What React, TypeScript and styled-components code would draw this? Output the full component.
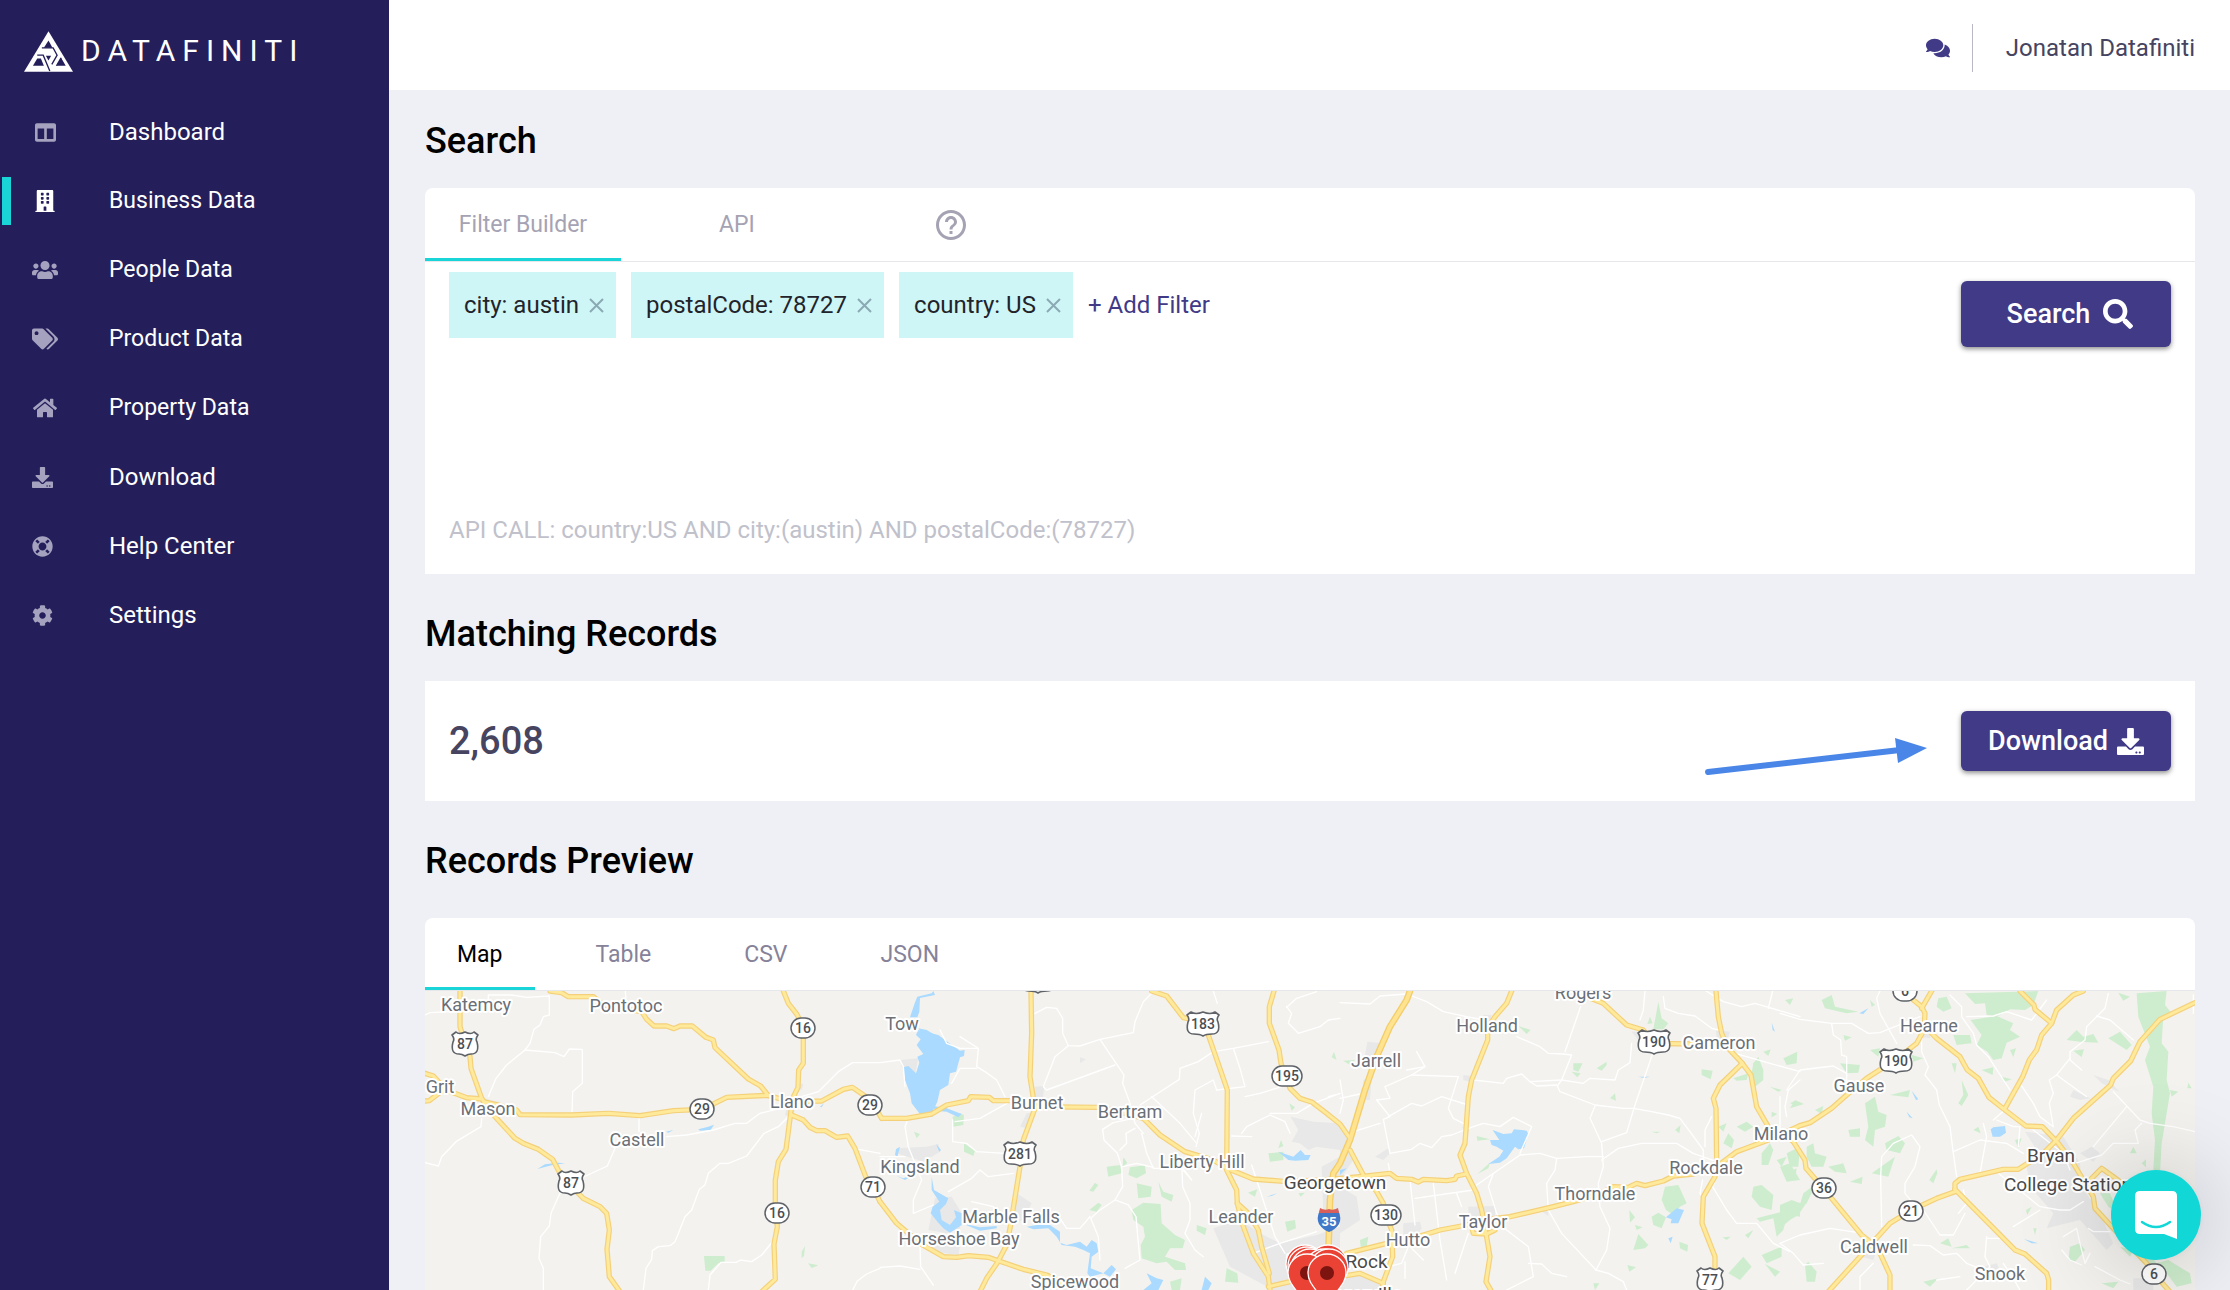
import React from 'react';
import styled, { createGlobalStyle } from 'styled-components';
import {
  FaColumns, FaBuilding, FaUsers, FaTags, FaHome, FaDownload, FaLifeRing, FaCog, FaComments, FaSearch,
} from 'react-icons/fa';
import { MdHelpOutline } from 'react-icons/md';

const colors = {
  navy: '#241f5b',
  indigo: '#403a87',
  teal: '#1ad5d8',
  chip: '#cff6f6',
  page: '#eff0f6',
  ink: '#46445f',
  muted: '#a5a3b3',
  tab: '#85829a',
  faint: '#c0c1cb',
  line: '#e6e7ea',
};

const GlobalStyle = createGlobalStyle`
  *, *::before, *::after { box-sizing: border-box; }
  body { margin: 0; background: ${colors.page}; font-family: Roboto, "Liberation Sans", sans-serif; font-size: 24px; line-height: 28px; color: #000; }
  button { font: inherit; border: 0; background: none; padding: 0; cursor: pointer; }
  h2, p, ul { margin: 0; padding: 0; }
  ul { list-style: none; }
`;

const Shell = styled.div`
  display: flex;
  height: 100vh;
  overflow: hidden;
`;

const Sidebar = styled.aside`
  flex: 0 0 389px;
  background: ${colors.navy};
  color: #fff;
`;

const Brand = styled.a`
  display: flex;
  align-items: center;
  gap: 8px;
  padding: 30px 24px 0;
  height: 72px;
  color: #fff;
  text-decoration: none;
  font-size: 30px;
  letter-spacing: 7px;
`;

const NavItem = styled.li<{ $active?: boolean }>`
  display: flex;
  align-items: center;
  height: 48px;
  margin: 0 0 21px 2px;
  border-left: 9px solid ${p => (p.$active ? colors.teal : 'transparent')};
  color: ${p => (p.$active ? '#fff' : '#a5a2bf')};
`;

const NavList = styled.ul`
  padding-top: 36px;
`;

const NavLink = styled.a`
  display: flex;
  align-items: center;
  flex: 1;
  color: inherit;
  text-decoration: none;
`;

const NavIcon = styled.span<{ $start?: boolean }>`
  display: flex;
  justify-content: ${p => (p.$start ? 'flex-start' : 'center')};
  width: 26px;
  margin: 0 51px 0 21px;
`;

const NavText = styled.span<{ $compact?: boolean }>`
  color: #fff;
  font-size: ${p => (p.$compact ? 23 : 24)}px;
`;

const Main = styled.main`
  flex: 1;
  min-width: 0;
  display: flex;
  flex-direction: column;
`;

const TopBar = styled.header`
  display: flex;
  align-items: center;
  justify-content: flex-end;
  height: 90px;
  padding: 0 35px 0 0;
  background: #fff;
`;

const ChatButton = styled.button`
  display: flex;
  color: ${colors.indigo};
  margin: 6px 22px 0 0;
`;

const UserName = styled.span`
  display: flex;
  align-items: center;
  height: 48px;
  border-left: 1px solid #b9b9c6;
  padding-left: 33px;
  margin-top: 6px;
  color: ${colors.ink};
`;

const Content = styled.div`
  flex: 1;
  min-height: 0;
  display: flex;
  flex-direction: column;
  padding: 30px 35px 0 36px;
`;

const Title = styled.h2<{ $wide?: boolean }>`
  font-size: 36px;
  line-height: 42px;
  font-weight: 500;
  margin-bottom: ${p => (p.$wide ? 36 : 26)}px;
`;

const Card = styled.section<{ $round?: boolean }>`
  background: #fff;
  border-radius: ${p => (p.$round ? '8px 8px 0 0' : '0')};
  margin-bottom: 39px;
`;

const Tabs = styled.div<{ $gap: number; $tall?: boolean }>`
  display: flex;
  gap: ${p => p.$gap}px;
  height: ${p => (p.$tall ? 74 : 73)}px;
  border-bottom: 1px solid ${colors.line};
`;

const Tab = styled.button<{ $active?: boolean; $tone?: string; $width?: number }>`
  display: flex;
  align-items: center;
  justify-content: center;
  width: ${p => (p.$width ? p.$width + 'px' : 'auto')};
  padding: 4px 32px 0;
  border-bottom: 3px solid ${p => (p.$active ? colors.teal : 'transparent')};
  color: ${p => p.$tone || colors.tab};
  font-size: 23px;
  white-space: nowrap;
`;

const SearchBody = styled.div`
  display: flex;
  justify-content: space-between;
  min-height: 312px;
  padding: 10px 24px 30px;
`;

const FilterColumn = styled.div`
  display: flex;
  flex-direction: column;
  justify-content: space-between;
`;

const Filters = styled.div`
  display: flex;
  align-items: center;
  gap: 15px;
`;

const Chip = styled.span`
  display: flex;
  align-items: center;
  gap: 10px;
  height: 66px;
  padding: 0 12px 0 15px;
  background: ${colors.chip};
  color: #22232b;
`;

const ChipClose = styled.button`
  display: flex;
  color: #8aa9b4;
`;

const AddFilter = styled.button`
  color: ${colors.indigo};
`;

const ApiCall = styled.p`
  color: ${colors.faint};
`;

const Action = styled.button<{ $tall?: boolean }>`
  display: flex;
  align-items: center;
  justify-content: center;
  gap: ${p => (p.$tall ? 13 : 9)}px;
  width: 210px;
  height: ${p => (p.$tall ? 66 : 60)}px;
  margin-top: ${p => (p.$tall ? 9 : 0)}px;
  padding-left: ${p => (p.$tall ? 8 : 0)}px;
  border-radius: 6px;
  background: ${colors.indigo};
  box-shadow: 0 2px 5px rgba(0, 0, 0, 0.45);
  color: #fff;
  font-size: 27px;
  font-weight: 500;
`;

const CountRow = styled.div`
  display: flex;
  align-items: center;
  height: 120px;
  padding: 0 24px;
`;

const Count = styled.span`
  flex: 1;
  font-size: 38px;
  line-height: 44px;
  font-weight: 500;
  color: ${colors.ink};
`;

const Pointer = styled.svg`
  margin-right: 34px;
`;

const PreviewCard = styled(Card)`
  flex: 1;
  min-height: 200px;
  margin: 0;
  display: flex;
  flex-direction: column;
`;

const MapSvg = styled.svg`
  flex: 1;
  width: 100%;
  min-height: 0;
  background: #f3f2ee;
  font-family: Roboto, "Liberation Sans", sans-serif;
`;

const Launcher = styled.button`
  position: fixed;
  right: 29px;
  bottom: 30px;
  display: flex;
  align-items: center;
  justify-content: center;
  width: 90px;
  height: 90px;
  border-radius: 50%;
  background: #12d7d7;
  box-shadow: 0 1px 9px rgba(0, 0, 0, 0.06), 0 3px 96px rgba(0, 0, 0, 0.26);
`;

/* ---------- map data: sheets drawn at three units per pixel ---------- */

type Sheet = {
  x: number;
  land: string[];
  town: string[];
  water: string[];
  lanes: string[];
  roads: string[];
};

const sheets: Sheet[] = [
  {
    x: -15,
    land: ['852,828 914,828 914,845 895,850 872,872 856,872', '1155,798 1145,815 1145,835 1152,828', '1164,850 1175,864 1195,856'],
    town: ['190,355 235,365 245,385 200,395', '1100,385 1125,385 1120,410 1095,405', '1135,310 1150,312 1145,330 1135,328'],
    water: ['835,448 865,440 882,434 872,450 840,452', '352,567 375,553 415,548 435,550 395,556', '738,455 760,450 745,458', '1200,380 1212,370 1205,382'],
    lanes: [
      '15,105 30,98 90,95', '205,60 205,45 275,45 320,52 388,48 388,105 370,110 360,135 342,148 330,190 315,210 260,255 228,295 205,350',
      '315,210 405,218 432,230 448,207 487,208 487,310 458,335 456,400', '616,33 618,60', '657,410 657,455',
      '185,415 183,440 108,485 65,530 55,558 15,548', '740,470 800,465 880,450 945,430 980,430 1020,400 1080,385',
      '587,500 562,558 497,588 430,620 415,650 393,700 388,738 362,770 357,835 370,865 370,930',
      '1110,405 1075,440 1032,460 980,528 925,550 900,550 865,580 855,615 838,628 815,690 795,710 765,785 750,797 715,800 697,812 695,838 678,865 670,930',
      '1062,780 1025,825 995,845 962,840 948,847 903,847 870,885 865,930', '1145,350 1195,335 1255,275 1298,248 1380,248',
      '1315,508 1380,520', '1380,865 1340,882 1312,903 1298,930',
    ],
    roads: [
      '120,33 120,140 128,165 150,230 153,265 185,355 225,410 285,475 310,490 355,508 398,538 420,580 455,620 490,655 540,680 560,700 568,750 561,808 568,890 600,935',
      '390,33 425,38 445,50 520,50 550,75 600,85 665,95 680,118 702,138 740,138 762,146 780,138 817,138 858,172 880,180 885,203 985,297 1022,318 1045,347',
      '15,280 40,288 60,310 70,328 110,342 140,353 185,357', '15,363 28,362 50,345 70,330',
      '190,365 235,375 290,390 300,404 455,405 565,400 660,407 760,392 847,388 920,352 1045,346 1110,365 1205,363 1270,328 1297,322 1350,358 1385,415',
      '1090,33 1105,70 1130,102 1150,140 1150,250 1136,270 1134,322 1118,355 1112,400 1098,508 1075,545 1066,600 1066,690 1072,740 1062,792 1066,898 1025,935',
      '1115,405 1150,420 1170,442 1190,452 1215,452 1250,472 1283,468 1305,505 1337,590 1360,625 1380,665',
    ],
  },
  {
    x: 1365,
    land: [
      '218,410 240,400 252,405 250,435 220,440', '102,455 120,462 110,475', '252,490 285,512 280,528 252,515', '730,532 742,548 728,562',
      '680,560 720,555 725,580 685,590', '750,562 795,556 798,580 770,595 745,585', '628,632 645,608 655,615 640,635', '628,690 655,668 665,675 650,695',
      '770,610 815,620 812,650 775,655', '835,605 850,635 880,645 875,665 845,650', '755,690 790,668 842,672 845,730 885,765 915,780 908,805 870,805 855,830 915,850 918,870 885,870 860,845 830,850 785,835 782,795 795,770 790,740 760,720',
      '950,735 980,745 975,765 950,752', '1165,520 1210,515 1210,540 1170,545', '1203,480 1210,498 1195,505', '1362,215 1370,240 1355,232', '1228,370 1245,382 1235,392',
      '1104,638 1132,628 1125,650', '1215,725 1245,720 1248,745 1222,755', '1040,865 1072,880 1075,908 1035,905', '870,905 905,895 900,930 875,930', '1255,640 1275,638 1262,650',
    ],
    town: [
      '62,240 115,235 105,285 65,262', '50,505 140,500 175,492 180,515 130,545 50,520', '465,320 492,318 490,350 455,355', '440,400 465,395 440,445 420,440',
      '165,655 215,650 245,700 240,745 200,760 145,750', '410,640 455,670 430,720 385,740', '600,232 618,238 600,250', '1232,410 1300,425 1380,430 1380,510 1310,500 1285,510 1260,490 1235,485 1255,450',
      '1000,745 1080,720 1140,760 1200,790 1310,765 1380,740 1380,930 1180,930 1050,860', '150,790 240,800 235,825 160,815', '1325,560 1380,530 1380,720 1330,700',
    ],
    water: [
      '115,150 175,165 195,180 240,212 254,210 252,228 240,232 228,275 210,280 205,315 180,330 172,365 160,390 158,410 120,402 95,370 90,340 75,300 70,262 85,258 108,280 118,248 112,230 130,222 110,195 122,178 108,165',
      '90,112 104,70 112,50 155,40 160,33 165,45 120,54 118,95 112,112', '115,145 140,150 165,165 170,180 150,165 125,160',
      '160,378 200,385 245,402 235,412 200,395 165,392', '48,508 60,500 52,530 45,525', '168,492 183,510 178,515', '50,588 70,595 105,582 75,600',
      '155,590 162,630 205,655 198,672 180,690 185,720 210,735 228,712 222,690 245,700 245,735 210,758 190,745 175,728 152,700 158,680 178,665 155,630',
      '245,730 300,742 350,738 350,745 300,752', '440,740 470,735 510,735 540,755 540,788 560,795 600,785 620,800 635,780 650,790 655,815 635,830 632,865 670,880 695,855 708,868 690,890 670,880 630,890 622,880 630,820 610,810 585,800 545,795 530,770 505,745 460,748',
      '1195,515 1240,530 1262,510 1275,525 1292,525 1285,540 1245,542 1225,540', '1160,650 1192,640 1175,648', '800,880 830,895 850,900 835,930 790,930 815,910', '975,890 995,910 985,930 965,930',
    ],
    lanes: [
      '0,248 60,240 70,260 75,320', '240,170 295,205 290,260 315,275 350,300 375,350', '180,150 200,190 240,205 293,205', '215,310 240,265 290,265',
      '465,100 500,82 530,85 548,115 548,160 565,197 600,198 660,178 760,158 765,125 790,65 815,40', '565,197 525,230 490,320 500,330 705,255', '660,178 705,245 732,285 728,310 750,370 765,430 790,460',
      '780,375 898,298 900,265 955,245 1000,215 1060,205 1165,185', '1060,205 1080,265 1095,320 1010,330', '1010,330 1000,300 945,330 940,400 958,460 948,500', '815,350 900,430 950,490',
      '760,415 700,428 668,448 672,480 712,520 725,560 728,620 705,660 660,690 632,715 655,770 660,840', '765,445 738,460 740,490 720,510', '785,460 800,520 820,565 905,565 935,600 905,560', '728,560 770,550 820,562',
      '705,660 745,675 768,710 775,790 780,840 735,865', '905,550 908,620 930,670 930,720 915,760 945,810 970,830', '1055,468 1115,470', '1115,555 1130,600 1185,770 1215,820', '1085,460 1100,440 1170,405 1215,425 1230,460',
      '1095,350 1140,340 1205,320', '1170,400 1250,400 1300,370 1380,340', '540,715 560,745 600,745 630,710', '0,530 75,530', '85,415 75,440 85,500 125,600 100,660 100,700 160,675', '218,420 218,485 260,490 290,515 375,520',
      '205,635 275,595 300,570 325,590 400,580', '275,665 340,680 345,700', '120,795 122,860 160,915', '0,862 60,858 120,868', '225,425 300,415 390,365', '1120,820 1200,790 1310,755', '1220,80 1235,100 1225,130 1255,160 1320,140 1345,120 1380,115', '1220,82 1250,55 1310,35',
      '1000,33 1012,70', '965,400 945,470', '1345,350 1365,345',
    ],
    roads: [
      '5,415 80,415 155,402 200,375 265,362 272,350 328,352 340,362 390,362 460,380 650,382 700,390 790,415 840,465 915,515 1000,540 1040,565 1120,597 1210,604 1330,600 1440,590',
      '453,33 455,160 450,290 465,385 430,480 420,560 390,745 380,795 352,848 320,895 300,935',
      '0,665 50,730 120,790 190,830 230,832 265,827 325,832 430,868 500,885 560,915',
      '815,33 860,48 910,113 970,125 985,165 1042,330 1040,570 1070,630 1072,670 1090,740 1120,820 1165,890 1170,930',
      '1072,670 1105,700 1135,750 1145,800 1168,880',
      '1182,33 1168,80 1168,130 1197,210 1203,250 1230,325 1260,355 1297,367 1340,400 1380,432 1410,475',
      '1165,920 1230,905 1380,890 1440,880 1510,910',
    ],
  },
  {
    x: 2745,
    land: [
      '955,65 965,115 985,130 970,148 940,148', '930,110 938,130 922,132', '700,250 728,250 715,275 700,270', '695,275 722,280 712,292', '770,265 800,245 800,255 785,272', '810,355 825,340 828,362', '1085,268 1118,272 1112,298 1085,285',
      '535,138 572,150 560,162', '10,242 45,240 30,255', '410,468 450,478 412,482', '412,582 450,548 445,565', '1180,295 1225,280 1220,300 1190,302', '1240,250 1255,230 1270,270 1270,300 1245,320 1235,280', '1330,235 1372,215 1370,250 1340,255',
      '1270,215 1292,208 1285,228', '1290,320 1325,330 1315,335', '1135,440 1160,430 1150,455', '1165,460 1182,480 1175,505 1150,490', '1190,440 1220,425 1240,440 1215,455', '1265,520 1290,490 1300,510 1285,555 1265,555', '1310,540 1340,530 1325,560',
      '1240,620 1265,615 1300,645 1295,690 1260,680 1235,650', '1250,715 1345,690 1330,750 1310,770 1300,715 1260,725', '1345,675 1380,668 1380,710 1350,705', '1265,825 1325,800 1325,830 1280,850', '1275,852 1320,875 1305,890', '1165,880 1210,830 1235,860 1200,900',
      '975,620 1015,615 1040,670 1020,680 1000,705 978,690 965,660', '935,710 955,698 978,712 965,745 940,735', '880,810 895,762 925,795 915,805', '862,855 888,862 868,875', '1018,785 1044,795 1042,815 1020,805', '868,690 885,712 870,728', '935,455 962,455 950,460', '1005,450 1022,435 1018,460',
      '60,780 85,770 80,800 62,800', '760,910 778,910 765,930', '885,735 908,742 890,750', '1148,772 1172,770 1160,780', '1215,765 1240,750 1225,775', '1295,395 1312,402 1295,412', '1350,370 1365,362 1365,375', '1340,580 1370,565 1365,600', '1340,520 1380,500 1375,560 1350,560',
    ],
    town: [
      '82,185 130,190 110,240 75,225', '70,300 95,290 90,360 68,360', '430,105 455,105 450,125 430,120', '370,285 395,288 390,305 370,300', '365,440 388,440 385,462', '385,680 465,678 465,725 385,715', '190,730 240,725 245,745 220,790 190,770', '0,430 25,470 40,540 0,600',
      '0,620 50,650 60,720 0,760', '0,890 60,885 130,912 120,930 0,930', '105,530 145,505 150,520 130,540', '875,155 900,155 895,180', '1128,150 1170,155 1160,185 1130,175', '600,690 625,695 625,708',
    ],
    water: [
      '450,480 478,480 458,450 490,462 515,460 522,448 560,452 565,462 552,505 535,508 525,500 500,535 480,548 445,552 478,530 490,512 470,500 455,495', '1010,685 1032,690 1015,730 992,730 995,718 978,712',
      '985,775 998,770 992,790', '895,290 930,290 912,294', '1295,128 1305,155 1298,150', '0,570 20,565 0,585',
    ],
    lanes: [
      '0,68 90,72 120,48 200,42 260,65 310,95 380,110 430,120', '530,170 600,200 625,220 670,222 695,225 665,300 570,305 545,282 500,295 490,310 445,305 400,300', '722,80 675,215', '665,300 652,318 660,335 765,375 850,385 880,385 935,395 985,405 1020,415 1050,455 1090,510 1090,550',
      '665,300 730,310 750,295 825,300 835,270 870,248 875,190', '940,215 885,375 860,458 785,485', '765,378 750,415 785,490 790,560 775,610 780,680 810,745 800,810 768,870', '785,540 835,505 905,490 1010,490 1060,520 1130,545', '768,870 805,880 850,905 860,930', '650,315 590,318 570,305',
      '0,355 60,342', '110,360 150,410 130,418 150,520 215,508 240,490 275,503 305,470 335,465 400,440 430,430 480,440 520,412 575,440 540,520', '110,360 150,355 135,320 215,285 255,260', '215,285 355,290 325,385 340,415 370,430', '145,410 215,370 245,378 305,350 375,372', '410,615 540,525 600,520 650,535 740,530 790,530',
      '650,535 645,570 620,610 625,690 665,760', '460,580 445,620 470,700 500,750 565,800 580,890 500,930', '565,850 605,852 635,880 680,890', '768,870 665,760', '210,600 225,735', '225,655 400,630', '280,610 300,780 320,900', '350,640 365,680', '385,760 345,880', '160,785 200,790 250,840', '120,430 40,455', '145,550 150,580',
      '0,400 10,360 0,300', '230,215 255,260 200,270', '970,50 975,85 1015,100 1065,108 1115,145 1135,150', '915,33 910,90 900,120', '1098,33 1150,65 1205,80 1245,70 1380,110', '1298,33 1285,85', '1185,220 1290,250 1380,275', '1380,300 1345,330 1335,380 1340,410', '1115,410 1095,450 1095,500', '1130,590 1118,620 1160,690 1190,730 1250,730 1300,790 1350,815', '1088,600 1080,640 1092,660',
      '100,870 185,850 205,800', '195,845 195,895',
    ],
    roads: [
      '30,510 70,585 110,635 130,670 137,705 155,750 158,830 130,905 125,935',
      '60,590 150,580 170,595 215,598 235,606 250,598 320,602 345,598 350,588 378,582',
      '515,33 500,70 465,110 443,145 443,180 395,300 385,350 375,490 360,525 380,580 410,640 425,690 438,760 450,830 438,905 455,935',
      '0,835 20,820 140,790 200,780 300,750 380,735 430,720 510,710 640,680 700,665 780,640 820,620 865,622 890,610 915,617 970,603 1000,588 1060,582 1130,560 1190,515 1285,480 1340,455 1380,437',
      '395,740 400,760 440,762 465,750',
      '740,50 790,70 860,135 910,150 940,190 1050,192 1120,190',
      '1128,33 1135,110 1145,160 1165,205 1207,250 1233,285 1250,380 1285,440 1340,470 1360,485',
      '1207,250 1140,315 1120,355 1128,385 1130,540 1125,590 1090,650 1086,730 1125,830 1125,870 1115,935',
    ],
  },
  {
    x: 4065,
    land: [
      '555,40 775,33 760,75 735,90 690,88 650,110 620,105 615,70 585,72', '572,120 650,108 700,130 690,150 720,170 680,188 665,235 640,240 622,215 590,195 605,165', '520,165 570,165 575,190 530,195', '475,55 500,50 515,85 490,95 470,80', '515,250 530,250 525,280', '545,300 565,345 545,378 535,370 550,345',
      '860,180 890,150 910,170 940,162 955,188 900,185', '880,212 912,208 905,232', '985,175 1020,155 1055,195 1040,210', '1015,38 1050,50 1030,62', '1070,40 1160,33 1155,75 1175,100 1150,110 1145,190 1165,215 1160,300 1170,340 1160,400 1145,490 1140,580 1120,570 1125,480 1115,400 1120,320 1095,240 1110,200 1075,110',
      '1170,330 1195,335 1175,350', '1225,308 1235,325 1222,325', '1085,550 1098,538 1098,562', '1060,500 1070,520 1050,520', '180,250 240,255 235,278 200,280', '270,210 300,205 295,230', '330,345 390,330 385,352', '255,370 285,350 295,395 320,405 315,440 285,450 280,500 255,480 265,440', '315,490 355,468 375,490 360,520 320,510',
      '205,450 240,445 240,470 210,470', '80,500 100,490 105,520 140,530 130,560 95,560 80,530', '145,560 190,550 200,580 165,575', '275,580 345,530 325,590', '210,605 248,590 245,612', '0,560 30,550 60,600 20,605', '0,675 35,660 75,675 55,705 30,720 0,745', '55,690 70,640 110,610 80,670', '30,385 45,360 72,372', '105,390 130,378 125,402',
      '125,60 155,45 165,80 235,95 200,100 135,85', '15,60 40,55 30,75', '190,165 215,172 195,182', '270,60 285,75 275,80', '480,790 505,775 515,800', '515,805 560,795 570,805', '448,600 470,568 472,580 460,610', '738,690 755,680 742,705', '865,840 870,800 900,790 915,810 885,845', '1020,800 1060,810 1050,830', '1080,830 1110,825 1130,850 1165,840 1230,880 1235,910 1190,920 1160,880',
      '75,855 85,845 110,875 105,905 80,905', '430,905 475,895 450,920', '965,910 1015,905 1000,925', '960,640 990,640 1015,700 985,680', '580,450 595,440 602,460', '760,745 770,745 765,765', '665,290 695,298 675,305', '605,270 640,262 638,285', '690,210 708,205 700,232', '395,225 430,235 400,245', '705,480 725,475 715,505',
    ],
    town: ['735,455 850,470 900,550 905,620 960,700 1000,790 980,810 900,720 800,745 820,700 750,620 740,560 770,510', '420,150 455,150 450,175 420,170', '870,350 880,330 930,355 900,360', '940,285 985,300 1018,335 965,310', '900,520 935,500 960,520 940,545', '250,805 290,810 280,840 245,830', '1060,895 1120,895 1120,930 1060,930', '610,860 650,850 665,880 620,890'],
    water: ['632,448 640,442 675,438 678,458 660,470 638,470', '238,100 265,85 250,102', '395,332 415,358 408,360', '380,395 398,415 388,412', '732,777 775,790 755,790'],
    lanes: [
      '0,100 60,118 155,130 215,130 265,160 300,158 420,110', '155,130 160,165 182,180 185,225 200,230 200,305', '300,33 290,55 300,100 350,190', '425,170 425,215 445,260 435,285 470,330 478,375 510,440 520,520 530,590', '20,330 60,270 160,258 200,280', '510,45 545,80 545,110 580,160 590,195 625,230 690,330', '560,110 640,108 680,95 755,120 800,60', '985,40 975,85 920,140 915,180 870,215 870,240 905,270', '870,235 830,285 808,300 820,340 808,370 820,440',
      '830,285 920,350', '950,108 990,120 1060,180', '720,310 760,370 780,410 820,440', '1000,335 1080,420 1110,430 1180,440 1245,455', '1040,380 990,440 940,500', '1085,430 1065,450 1075,490 1000,490 965,525 885,550', '610,430 620,470 600,580', '520,515 600,480 680,490 730,520', '650,420 700,440 720,440 715,500', '680,385 640,420', '0,460 0,350', '305,740 302,590 305,530 340,490 395,465 420,500 405,560 375,610 375,640 400,670', '550,630 560,670 535,700', '430,690 480,765 520,765 555,700',
      '400,795 450,797 490,825 530,820 560,850 610,870', '620,770 615,830 630,860 560,930', '620,775 670,775', '470,900 540,890', '0,790 60,765 150,745 250,760', '0,790 40,820 70,855 130,850', '280,850 240,890 240,930', '655,580 730,640 780,680 840,690 870,690 910,665', '700,740 780,690', '760,450 850,520 870,570', '850,770 890,745 900,790 915,850 930,820', '845,810 870,840 905,855', '925,745 940,755 990,755', '945,860 1020,900 1050,912', '670,850 700,895 720,930', '1240,45 1240,100',
    ],
    roads: [
      '60,437 90,428 155,385 200,345 260,295 345,240 410,190 432,150 435,100 425,80 400,60 370,33', '455,33 425,85',
      '435,140 470,175 540,230 562,270 595,295 627,352 675,390 738,438 787,440 835,490 880,550 910,600 940,650 945,685 1000,745 1100,850 1125,885 1170,935',
      '720,33 762,75 765,88 815,130', '910,33 880,45 830,90 815,130 785,165 770,210 748,240 728,290 675,385',
      '1245,68 1140,118 1080,185 1052,243 1000,295 992,315 880,415 830,480 790,520 715,568 670,568 540,598 525,610 525,635 470,655 395,690 330,730 280,785 240,830 145,935',
      '525,628 705,810 735,822 800,880 806,900 806,935', '910,620 965,565 1000,590 1040,620 1100,700',
      '40,485 75,540 78,565 130,625 245,765 270,785 300,820 330,885 330,935',
    ],
  },
];

const interstate = '2955,0 2945,27 2895,107 2855,197 2820,297 2775,447 2745,517 2725,547 2715,627 2711,757 2711,900';

type Place = [name: string, x: number, y: number, city?: boolean];

const places: Place[] = [
  ['Katemcy', 51, 20], ['Pontotoc', 201, 21], ['Grit', 15, 102], ['Mason', 63, 124], ['Castell', 212, 155], ['Llano', 367, 117],
  ['Tow', 477, 39], ['Burnet', 612, 118], ['Bertram', 705, 127], ['Kingsland', 495, 182], ['Liberty Hill', 777, 177],
  ['Marble Falls', 586, 232], ['Horseshoe Bay', 534, 254], ['Spicewood', 650, 297], ['Georgetown', 910, 198, true], ['Leander', 816, 232],
  ['Holland', 1062, 41], ['Jarrell', 951, 76], ['Rogers', 1158, 8], ['Cameron', 1294, 58], ['Milano', 1356, 149], ['Rockdale', 1281, 183],
  ['Thorndale', 1170, 209], ['Taylor', 1058, 237], ['Hutto', 983, 255], ['Round Rock', 912, 277, true], ['Pflugerville', 930, 310, true],
  ['Hearne', 1504, 41], ['Gause', 1434, 101], ['Bryan', 1626, 171, true], ['College Station', 1643, 200, true], ['Caldwell', 1449, 262], ['Snook', 1575, 289],
];

type Route = [num: string, x: number, y: number, us?: boolean];

const routes: Route[] = [
  ['87', 40, 53, true], ['87', 146, 192, true], ['16', 378, 37], ['29', 277, 118], ['29', 445, 114], ['71', 448, 196], ['16', 352, 222],
  ['281', 613, -10, true], ['183', 778, 33, true], ['195', 862, 85], ['281', 595, 163, true], ['130', 961, 224], ['190', 1229, 51, true],
  ['77', 1285, 289, true], ['6', 1480, 0], ['190', 1471, 70, true], ['36', 1399, 197], ['21', 1486, 220], ['6', 1729, 283],
];

function RouteBadge({ num, x, y, us }: { num: string; x: number; y: number; us?: boolean }) {
  const w = num.length > 2 ? 15 : 12;
  return (
    <g transform={`translate(${x} ${y})`}>
      {us ? (
        <path
          d={`M${-w - 1} -9 L${-w + 3} -12 Q${-w / 2} -9 0 -12 Q${w / 2} -9 ${w - 3} -12 L${w + 1} -9 Q${w - 2} -5 ${w} -2 Q${w + 3} 10 ${w - 6} 10 Q3 10 0 12 Q-3 10 ${-w + 6} 10 Q${-w - 3} 10 ${-w} -2 Q${-w + 2} -5 ${-w - 1} -9Z`}
          fill="#fff" stroke="#5f6368" strokeWidth="1.6" strokeLinejoin="round"
        />
      ) : (
        <rect x={-w} y={-10} width={w * 2} height={20} rx={10} fill="#fff" stroke="#5f6368" strokeWidth="1.5" />
      )}
      <text y="5" textAnchor="middle" fontSize="14" fontWeight="500" fill="#4b4f54">{num}</text>
    </g>
  );
}

function Pin({ x, y, dot }: { x: number; y: number; dot?: boolean }) {
  return (
    <g transform={`translate(${x} ${y})`}>
      <path d="M0 -19 A19 19 0 0 1 19 0 C19 14 3 20 0 40 C-3 20 -19 14 -19 0 A19 19 0 0 1 0 -19Z" fill="#ea4335" stroke="#fff" strokeWidth="1.3" />
      {dot && <circle r="7" fill="#7d1410" />}
    </g>
  );
}

function RecordsMap() {
  return (
    <MapSvg role="img" aria-label="Map of matching records">
      <g transform="scale(0.33333)" fill="none" strokeLinejoin="round" strokeLinecap="round">
        {sheets.map(s => (
          <g key={s.x} transform={`translate(${s.x} -33)`}>
            {s.town.map(p => <polygon key={p} points={p} fill="#e8e8e8" />)}
            {s.land.map(p => <polygon key={p} points={p} fill="#ceedce" />)}
            {s.water.map(p => <polygon key={p} points={p} fill="#aadaff" />)}
            {s.lanes.map(p => <polyline key={p} points={p} stroke="#fff" strokeWidth="4" />)}
          </g>
        ))}
        {sheets.map(s => (
          <g key={s.x} transform={`translate(${s.x} -33)`} stroke="#f4d07a" strokeWidth="16">
            {s.roads.map(p => <polyline key={p} points={p} />)}
          </g>
        ))}
        <polyline points={interstate} stroke="#f3cd6b" strokeWidth="20" />
        {sheets.map(s => (
          <g key={s.x} transform={`translate(${s.x} -33)`} stroke="#ffe99a" strokeWidth="9">
            {s.roads.map(p => <polyline key={p} points={p} />)}
          </g>
        ))}
        <polyline points={interstate} stroke="#ffe38e" strokeWidth="12" />
      </g>
      {routes.map(([num, x, y, us]) => <RouteBadge key={`${num}-${x}`} num={num} x={x} y={y} us={us} />)}
      <g transform="translate(904 229)">
        <path d="M-9 -10 Q-4 -8 0 -10 Q4 -8 9 -10 Q13 -2 10 4 Q6 10 0 12 Q-6 10 -10 4 Q-13 -2 -9 -10Z" fill="#3f78c9" />
        <path d="M-9 -12 Q-4 -9 0 -11 Q4 -9 9 -12 L10 -7 H-10Z" fill="#d9605a" />
        <text y="6" textAnchor="middle" fontSize="13" fontWeight="700" fill="#fff">35</text>
      </g>
      <g textAnchor="middle" stroke="#fff" strokeWidth="4" strokeLinejoin="round" paintOrder="stroke">
        {places.map(([name, x, y, city]) => (
          <text key={name} x={x} y={y} fontSize={city ? 19 : 18} fill={city ? '#4a4a4a' : '#6b6f76'}>{name}</text>
        ))}
      </g>
      <Pin x={880} y={273} /><Pin x={882} y={275} /><Pin x={903} y={273} /><Pin x={885} y={277} /><Pin x={899} y={277} />
      <Pin x={904} y={277} />
      <Pin x={882} y={282} dot />
      <Pin x={902} y={282} dot />
    </MapSvg>
  );
}

function LogoMark() {
  return (
    <svg width="49" height="41" viewBox="24 18 148 122" aria-hidden="true">
      <polygon points="98,18 172,140 24,140" fill="#fff" />
      <g fill={colors.navy}>
        <polygon points="98,46 110,68 84,68" />
        <polygon points="64,100 75,100 84,122 51,122" />
        <polygon points="136,98 150,122 108,122 122,122" />
        <polygon points="90,92 106,92 98,106" />
      </g>
      <g fill="none" stroke={colors.navy} strokeWidth="4">
        <polyline points="78,68 112,68 124,90 108,118" />
        <polyline points="64,90 82,90 102,138" />
        <polyline points="136,98 122,122" />
      </g>
    </svg>
  );
}

const nav = [
  { label: 'Dashboard', icon: <FaColumns size={21} /> },
  { label: 'Business Data', icon: <FaBuilding size={22} />, active: true, compact: true },
  { label: 'People Data', icon: <FaUsers size={26} />, compact: true },
  { label: 'Product Data', icon: <FaTags size={26} />, compact: true },
  { label: 'Property Data', icon: <FaHome size={24} />, compact: true },
  { label: 'Download', icon: <FaDownload size={21} />, start: true },
  { label: 'Help Center', icon: <FaLifeRing size={21} />, start: true },
  { label: 'Settings', icon: <FaCog size={21} />, start: true },
];

const filters = ['city: austin', 'postalCode: 78727', 'country: US'];

export default function App() {
  return (
    <>
      <GlobalStyle />
      <Shell>
        <Sidebar>
          <Brand href="#" aria-label="Datafiniti">
            <LogoMark />
            DATAFINITI
          </Brand>
          <nav>
            <NavList>
              {nav.map(item => (
                <NavItem key={item.label} $active={item.active}>
                  <NavLink href="#" aria-current={item.active ? 'page' : undefined}>
                    <NavIcon $start={item.start}>{item.icon}</NavIcon>
                    <NavText $compact={item.compact}>{item.label}</NavText>
                  </NavLink>
                </NavItem>
              ))}
            </NavList>
          </nav>
        </Sidebar>
        <Main>
          <TopBar>
            <ChatButton aria-label="Messages"><FaComments size={24} /></ChatButton>
            <UserName>Jonatan Datafiniti</UserName>
          </TopBar>
          <Content>
            <Title>Search</Title>
            <Card $round>
              <Tabs role="tablist" $gap={0} $tall>
                <Tab role="tab" $active $tone={colors.muted} $width={196}>Filter Builder</Tab>
                <Tab role="tab" $tone={colors.muted} $width={232}>API</Tab>
                <Tab role="tab" $tone={colors.muted} $width={196} aria-label="Help"><MdHelpOutline size={36} /></Tab>
              </Tabs>
              <SearchBody>
                <FilterColumn>
                  <Filters>
                    {filters.map(f => (
                      <Chip key={f}>
                        {f}
                        <ChipClose aria-label={`Remove ${f}`}>
                          <svg width="15" height="15" viewBox="0 0 15 15" aria-hidden="true">
                            <path d="M1 1 14 14M14 1 1 14" stroke="currentColor" strokeWidth="2" />
                          </svg>
                        </ChipClose>
                      </Chip>
                    ))}
                    <AddFilter>+ Add Filter</AddFilter>
                  </Filters>
                  <ApiCall>API CALL: country:US AND city:(austin) AND postalCode:(78727)</ApiCall>
                </FilterColumn>
                <Action $tall>Search <FaSearch size={30} /></Action>
              </SearchBody>
            </Card>
            <Title>Matching Records</Title>
            <Card>
              <CountRow>
                <Count>2,608</Count>
                <Pointer width="223" height="68" viewBox="0 0 223 68" aria-hidden="true">
                  <path d="M4 65 L196 43" stroke="#4a86e8" strokeWidth="6" strokeLinecap="round" />
                  <polygon points="191,31 223,41 194,56" fill="#4a86e8" />
                </Pointer>
                <Action>Download <FaDownload size={27} /></Action>
              </CountRow>
            </Card>
            <Title $wide>Records Preview</Title>
            <PreviewCard $round>
              <Tabs role="tablist" $gap={29}>
                <Tab role="tab" $active $tone="#000">Map</Tab>
                <Tab role="tab">Table</Tab>
                <Tab role="tab">CSV</Tab>
                <Tab role="tab">JSON</Tab>
              </Tabs>
              <RecordsMap />
            </PreviewCard>
          </Content>
        </Main>
      </Shell>
      <Launcher aria-label="Open chat">
        <svg width="42" height="48" viewBox="0 0 42 48" aria-hidden="true">
          <path d="M5 0H37Q42 0 42 5V48L29 43H5Q0 43 0 38V5Q0 0 5 0Z" fill="#fff" />
          <path d="M7 31Q21 41 35 31" fill="none" stroke="#12d7d7" strokeWidth="2.4" strokeLinecap="round" />
        </svg>
      </Launcher>
    </>
  );
}
